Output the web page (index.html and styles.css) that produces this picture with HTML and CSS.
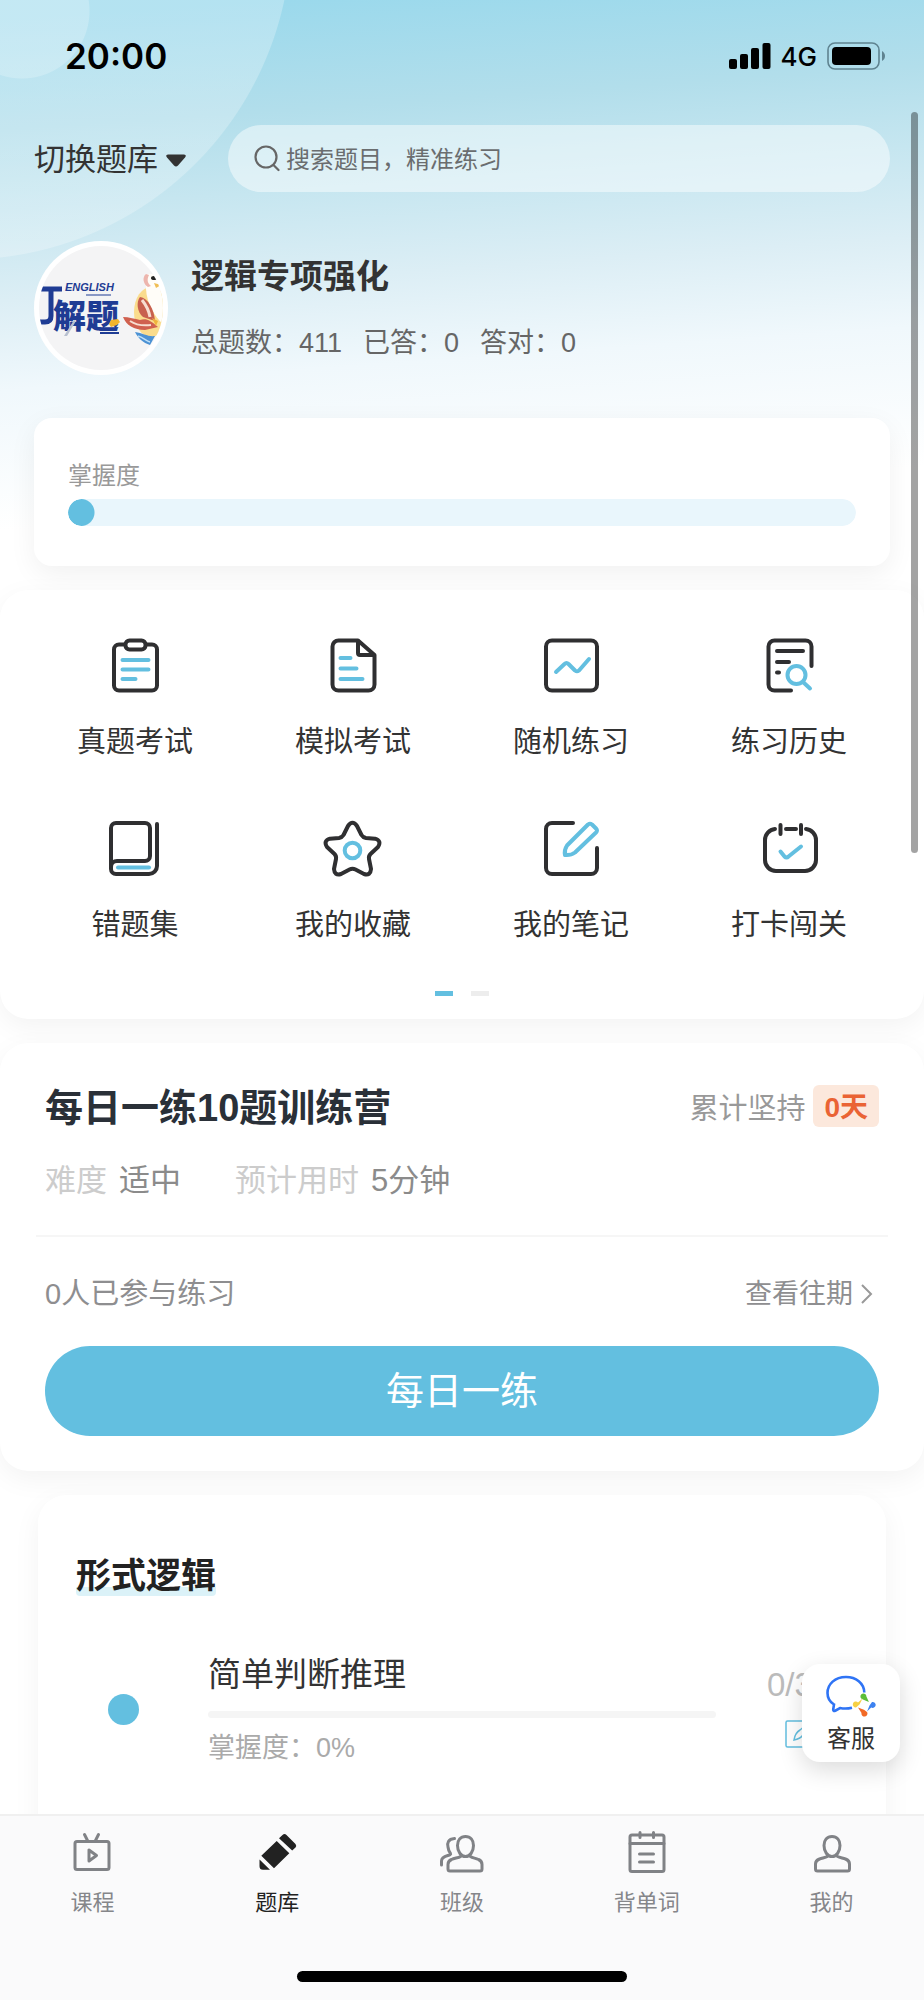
FILE: index.html
```html
<!DOCTYPE html>
<html lang="zh-CN">
<head>
<meta charset="utf-8">
<meta name="viewport" content="width=device-width, initial-scale=1">
<title>题库</title>
<link rel="stylesheet" href="styles.css">
</head>
<body>
<div class="app">
  <main class="content">
    <div class="statusbar">
      <span class="clock">20:00</span>
      <div class="status-icons">
        <svg width="42" height="28" viewBox="0 0 42 28" aria-hidden="true"><rect x="0" y="17" width="8" height="10" rx="2"/><rect x="11" y="12" width="8" height="15" rx="2"/><rect x="22" y="6" width="8" height="21" rx="2"/><rect x="33.500" y="1" width="8" height="26" rx="2"/></svg>
        <span class="network">4G</span>
        <svg width="60" height="28" viewBox="0 0 60 28" aria-hidden="true"><rect x="1" y="1" width="51" height="26" rx="7" fill="none" stroke="#5f8390" stroke-width="1.600"/><rect x="5" y="5" width="39" height="18" rx="4"/><path d="M55 9v10c4-2 4-8 0-10z" fill="#5f8390"/></svg>
      </div>
    </div>

    <div class="toolbar">
      <button class="switch" type="button">切换题库<svg width="20" height="13" viewBox="0 0 20 13" aria-hidden="true"><path d="M2 .5h16q3 .5 1 3l-7 8q-2 2-4 0l-7-8q-2-2.500 1-3z" fill="#333"/></svg></button>
      <label class="search">
        <svg width="26" height="27" viewBox="0 0 26 27" fill="none" stroke="#666" stroke-width="2.200" stroke-linecap="round" aria-hidden="true"><circle cx="12" cy="12" r="10.500"/><path d="M19.500 20l5 5"/></svg>
        <input type="search" placeholder="搜索题目，精准练习" aria-label="搜索题目">
      </label>
    </div>

    <section class="profile">
      <svg class="avatar" viewBox="0 0 134 134" role="img" aria-label="丁解题">
        <defs><clipPath id="face"><circle cx="67" cy="67" r="62"/></clipPath></defs>
        <circle cx="67" cy="67" r="67" fill="#fff"/>
        <circle cx="67" cy="67" r="62" fill="#f4f4f5"/>
        <g clip-path="url(#face)">
          <path d="M6 48h22M17 48v27q0 6-6 6H6" fill="none" stroke="#1f3c94" stroke-width="5"/>
          <text class="logo-en" x="31" y="50">ENGLISH</text>
          <path d="M52 54h25" stroke="#1f3c94" stroke-width="1"/>
          <text class="logo-cn" x="19" y="87">解题</text>
          <path d="M66 92h19" stroke="#1f3c94" stroke-width="2" fill="none"/>
          <path d="M30 95l10-16 2 1-9 15z" fill="#b8c0cf"/>
          <path d="M77 79l7-1 2 3-3 3-6 2-2-3z" fill="#f1b52d"/>
          <ellipse cx="117" cy="71" rx="17" ry="25" fill="#fadc8d"/>
          <path d="M112 34c5-3 10 0 14 4l4 8v38c-9-8-17-20-18-36z" fill="#fffdf8"/>
          <path d="M112 33c-4 3-3 10 2 13l3-1c-4-3-4-7-2-11z" fill="#edb5ad"/>
          <ellipse cx="120" cy="37" rx="3" ry="2" fill="#222"/>
          <path d="M120 42l7 2-5 3z" fill="#f0be54"/>
          <path d="M106 56c8 1 14 12 15 24l-12-4c-6-5-7-15-3-20z" fill="#c8604e"/>
          <path d="M108 59c4 5 7 11 8 17" stroke="#f7ddd0" stroke-width="3" fill="none"/>
          <path d="M89 76c6 0 12 2 17 3 6-2 10 0 18 7l-13 3c-11 0-19-5-22-13z" fill="#d0604f"/>
          <path d="M96 80c6 4 13 5 21 4" stroke="#f7ddd0" stroke-width="2" fill="none"/>
          <path d="M118 77l6 3-2 5z" fill="#efb23c"/>
          <path d="M101 91c8 1 13 5 20 4l-5 9c-7-2-12-7-15-13z" fill="#4c92d4"/>
          <path d="M104 95c5 1 8 5 12 6" stroke="#c2e1f7" stroke-width="1.500" fill="none"/>
        </g>
      </svg>
      <div class="profile-text">
        <h1>逻辑专项强化</h1>
        <p class="stats"><span>总题数：411</span><span>已答：0</span><span>答对：0</span></p>
      </div>
    </section>

    <section class="mastery">
      <label for="mastery">掌握度</label>
      <progress id="mastery" value="0" max="100"></progress>
    </section>

    <section class="panel menu">
      <nav class="grid">
        <a href="#"><svg class="icon" viewBox="0 0 56 56"><rect x="7" y="7.500" width="43" height="46" rx="5"/><rect x="18.500" y="3.500" width="20" height="9" rx="4" fill="#fff"/><path class="hl" d="M15.500 23h26M15.500 32.500h26M15.500 42h13"/></svg>真题考试</a>
        <a href="#"><svg class="icon" viewBox="0 0 56 56"><path d="M33 3.500H13.500a6 6 0 0 0-6 6v38a6 6 0 0 0 6 6h30a6 6 0 0 0 6-6V18L33 3.500V16q0 2 2 2h14.500"/><path class="hl" d="M15.500 21h10M15.500 31.500h16M15.500 42h22"/></svg>模拟考试</a>
        <a href="#"><svg class="icon" viewBox="0 0 56 56"><rect x="3" y="3.500" width="51" height="50" rx="6"/><path class="hl" d="M13 35l8.500-8q2-2 4 0l6.500 6.500q2 1.500 4 0L46 22"/></svg>随机练习</a>
        <a href="#"><svg class="icon" viewBox="0 0 56 56"><path d="M30 53.500H13.500a6 6 0 0 1-6-6v-38a6 6 0 0 1 6-6h31a6 6 0 0 1 6 6V29M16 14h26M16 25h12M16 35.500h2"/><path class="hl" d="M42 45l7 6.500"/><circle class="hl" cx="35.500" cy="38" r="9"/></svg>练习历史</a>
        <a href="#"><svg class="icon" viewBox="0 0 56 56"><path d="M4 48V8a5 5 0 0 1 5-5h29a5 5 0 0 1 5 5v28a5 5 0 0 1-5 5H10a6 6 0 0 0-6 6v2a5 5 0 0 0 5 5h33a8 8 0 0 0 8-8V4"/><path class="hl" d="M11 47.500h31"/></svg>错题集</a>
        <a href="#"><svg class="icon" viewBox="0 0 56 56"><path d="M23 6Q27.500-.5 32 6l4.500 9q1.500 2.500 4.500 3l9 .7q7 2 3 8.300l-7.500 7q-2 2-1.500 5l2 10q-.5 7-7 5l-8.500-4.500q-3-1.500-6 0L16 54q-6.500 2-7-5l2-10q.5-3-1.500-5L2 27q-4-6.300 3-8.300l9-.7q3-.5 4.500-3z"/><circle class="hl" cx="27.500" cy="30.500" r="7.800"/></svg>我的收藏</a>
        <a href="#"><svg class="icon" viewBox="0 0 56 56"><path d="M30 3H9a6 6 0 0 0-6 6v39a6 6 0 0 0 6 6h39a6 6 0 0 0 6-6V28"/><path class="hl" d="M24 25.500L45 4.500q2-1.500 4 0L53 8.500q2 2 0 4L32 32.500q-4 3-10 2.500-1-5 2-9.500z"/></svg>我的笔记</a>
        <a href="#"><svg class="icon" viewBox="0 0 56 56"><path d="M14 9A11 11 0 0 0 4 20v20a11 11 0 0 0 11 11h29a11 11 0 0 0 11-11V20A11 11 0 0 0 45 9M25 9h10M19.500 5v9M40 5v9"/><path class="hl" d="M19.500 31.500l4 5q2 2 4 0L40 26.500"/></svg>打卡闯关</a>
      </nav>
      <div class="dots"><i class="on"></i><i></i></div>
    </section>

    <section class="panel daily">
      <div class="row head">
        <h2>每日一练10题训练营</h2>
        <p class="streak">累计坚持<strong>0天</strong></p>
      </div>
      <dl class="meta">
        <div><dt>难度</dt><dd>适中</dd></div>
        <div><dt>预计用时</dt><dd>5分钟</dd></div>
      </dl>
      <hr>
      <div class="row foot">
        <span>0人已参与练习</span>
        <a class="past" href="#">查看往期<svg width="12" height="20" viewBox="0 0 12 20" fill="none" stroke="#999" stroke-width="2" aria-hidden="true"><path d="M1 1l9 9-9 9"/></svg></a>
      </div>
      <button class="start" type="button">每日一练</button>
    </section>

    <section class="chapter">
      <h3>形式逻辑</h3>
      <article class="lesson">
        <span class="bullet"></span>
        <div class="lesson-main">
          <h4>简单判断推理</h4>
          <div class="track"></div>
          <p>掌握度：0%</p>
        </div>
        <div class="lesson-side">
          <span>0/3</span>
          <svg width="28" height="28" viewBox="0 0 28 28" fill="none" stroke="#63bfe0" stroke-width="1.500" aria-hidden="true"><rect x="1" y="1" width="26" height="26" rx="1.500"/><path d="M9 20q1-7 6-10l5-4 3 3-5 6q-3 4-9 5z"/></svg>
        </div>
      </article>
    </section>

    <span class="scrollbar"></span>
    <button class="service" type="button">
      <svg width="52" height="42" viewBox="0 0 52 42" aria-hidden="true"><path d="M39.300 17.500C39 8 31 2 21 2 10 2 2.500 9 2.500 18c0 5 2.500 9 6.500 11.500l-.8 5q0 2 2 1.200L15 33q6 1.200 12-.3" fill="none" stroke="#2f74f5" stroke-width="2.600"/><path d="M36.200 23.500a3 3 0 1 1 5.200-2l2.500 5.500-6-2.500z" fill="#5bbd38"/><path d="M31 32.500a3 3 0 1 1 2-5l4.500-4-3 6z" fill="#f7d044"/><path d="M47 27a3 3 0 1 1-.8 5.500L42 36.500l2.500-6z" fill="#3d82f0"/><path d="M42 37a3 3 0 1 1-5.500 1L33 32.500l6 2.300z" fill="#f26a26"/></svg>
      客服
    </button>
  </main>

  <footer class="tabbar">
    <nav class="tabs">
      <a href="#"><svg class="tab-icon" viewBox="0 0 44 44"><rect x="5" y="10.500" width="34" height="28" rx="2"/><path d="M14.500 3.500l3 6M28.500 3.500l-3 6M19 19v11l7.500-5.500z"/></svg>课程</a>
      <a href="#" class="current" aria-current="page"><svg class="tab-icon solid" viewBox="0 0 44 44"><path d="M27.500 4q2-2 4 0l9 9q1.500 2 0 3.500L37.200 19.500 24 7.300zM21.700 10l12.600 12.300L19 37.300 6.300 24.700zM4.500 28.500L15 38.800H8q-3.500 0-3.500-3.500z"/></svg>题库</a>
      <a href="#"><svg class="tab-icon" viewBox="0 0 44 44"><path d="M14.500 7.500C8 8 7 12 8 16c.3 3 1 4.500 2.500 6.500C12 25 1.500 24 1.500 30v4M25.500 5.500c5 0 8 3.500 8 9 0 6-3.500 11-8 11s-8-5-8-11c0-5.500 3-9 8-9zM20.500 25.500c-2 1.500-6 1.500-9 3q-3.500 1.500-3.500 5V38q0 2 2 2h30q2 0 2-2v-4.500q0-3.500-3.500-5c-3-1.500-6-1.500-8-3"/></svg>班级</a>
      <a href="#"><svg class="tab-icon" viewBox="0 0 44 44"><rect x="5" y="4" width="34" height="36.500" rx="2"/><path d="M5 12.500h34M15 1.500v5M28.500 1.500v5M14.500 23h14M14.500 31h14"/></svg>背单词</a>
      <a href="#"><svg class="tab-icon" viewBox="0 0 44 44"><path d="M22 5.500c5 0 8 3.500 8 9 0 6-3.500 11-8 11s-8-5-8-11c0-5.500 3-9 8-9zM17.500 25.500c-2 1-5 1.500-8 2.500q-4 1.500-4 5V38q0 2 2 2h30q2 0 2-2v-5q0-3.500-4-5c-3-1-6-1.500-8-2.500"/></svg>我的</a>
    </nav>
    <span class="home"></span>
  </footer>
</div>
</body>
</html>
```
FILE: styles.css
```css
* { box-sizing: border-box; }

body, h1, h2, h3, h4, p, dl, dd { margin: 0; }

body {
  background: #fff;
  color: #333;
  font-family: "Liberation Sans", "Noto Sans CJK SC", sans-serif;
}

a { color: inherit; text-decoration: none; }

button {
  border: 0;
  padding: 0;
  background: none;
  color: inherit;
  font: inherit;
}

.app {
  display: flex;
  flex-direction: column;
  height: 100vh;
}

.content {
  position: relative;
  flex: 1;
  min-height: 0;
  overflow: hidden;
  background:
    radial-gradient(circle at 22px 11px, rgba(255, 255, 255, .22) 67px, transparent 68px),
    radial-gradient(circle at -36px -68px, rgba(255, 255, 255, .25) 327px, transparent 328px),
    linear-gradient(176deg, #9bd9ec 20px, #b2deeb 130px, #c6e6f0 210px, #dceef5 300px, #f0f8fc 390px, #fff 530px);
}

/* Status bar */
.statusbar {
  display: flex;
  align-items: center;
  justify-content: space-between;
  height: 112px;
  padding: 0 37px 0 65px;
  color: #000;
  font-family: Inter, sans-serif;
}

.clock { font-size: 35px; font-weight: 600; }
.status-icons { display: flex; align-items: center; gap: 10px; }
.network { font-size: 26px; font-weight: 500; }

/* Toolbar */
.toolbar {
  display: flex;
  align-items: center;
  gap: 42px;
  padding: 13px 34px 0;
}

.switch {
  display: flex;
  align-items: center;
  gap: 8px;
  padding-top: 3px;
  font-size: 31px;
  line-height: 44px;
}

.search {
  display: flex;
  flex: 1;
  align-items: center;
  gap: 6px;
  height: 67px;
  padding: 0 26px;
  border-radius: 34px;
  background: rgba(255, 255, 255, .47);
}

.search input {
  flex: 1;
  min-width: 0;
  border: 0;
  padding: 2px 0 0;
  outline: 0;
  background: none;
  font: inherit;
  font-size: 24px;
}

.search input::placeholder { color: #6a6d6f; opacity: 1; }

/* Profile */
.profile {
  display: flex;
  align-items: center;
  gap: 23px;
  padding: 49px 34px 0;
}

.avatar { width: 134px; height: 134px; }
.logo-en { fill: #1f3c94; font: italic bold 11px "Liberation Sans", sans-serif; }
.logo-cn { fill: #1f3c94; font: 900 33px "Noto Sans CJK SC", sans-serif; }
.profile h1 { font-size: 33px; line-height: 48px; }

.stats {
  display: flex;
  gap: 21px;
  margin-top: 22px;
  color: #666;
  font-size: 27px;
  line-height: 40px;
}

/* Mastery card */
.mastery {
  margin: 43px 34px 24px;
  padding: 41px 34px 40px;
  border-radius: 18px;
  background: #fff;
  box-shadow: 0 8px 28px rgba(0, 0, 0, .06);
}

.mastery label {
  display: block;
  margin-bottom: 6px;
  color: #999;
  font-size: 24px;
  line-height: 34px;
}

.mastery progress {
  display: block;
  appearance: none;
  width: 100%;
  height: 27px;
  border: 0;
  border-radius: 14px;
  overflow: hidden;
}

.mastery progress::-webkit-progress-bar {
  border-radius: 14px;
  background: radial-gradient(circle at 13px 50%, #63bfe0 13px, #e9f6fc 14px);
}

.mastery progress::-webkit-progress-value { background: #63bfe0; }

/* Panels */
.panel {
  margin-bottom: 24px;
  border-radius: 28px;
  background: #fff;
  box-shadow: 0 8px 28px rgba(0, 0, 0, .05);
}

.menu { padding: 47px 26px 23px; }

.grid {
  display: grid;
  grid-template-columns: repeat(4, 1fr);
  row-gap: 58px;
}

.grid a {
  display: flex;
  flex-direction: column;
  align-items: center;
  gap: 29px;
  font-size: 29px;
  line-height: 40px;
}

.icon {
  width: 56px;
  height: 56px;
  overflow: visible;
  fill: none;
  stroke: #2f2f31;
  stroke-width: 4;
  stroke-linecap: round;
  stroke-linejoin: round;
}

.icon .hl { stroke: #63bfe0; }

.dots {
  display: flex;
  justify-content: center;
  gap: 18px;
  margin-top: 46px;
}

.dots i { width: 18px; height: 5px; background: #ededed; }
.dots .on { background: #63bfe0; }

/* Daily practice */
.daily { padding: 40px 45px 35px; }

.row {
  display: flex;
  align-items: center;
  justify-content: space-between;
}

.daily h2 {
  padding-top: 4px;
  color: #2a3038;
  font-size: 38px;
  line-height: 42px;
}

.streak {
  display: flex;
  align-items: center;
  gap: 8px;
  color: #999;
  font-size: 29px;
}

.streak strong {
  padding: 3px 11px 0;
  border-radius: 6px;
  background: #fce8dc;
  color: #ea6334;
  font-size: 28px;
  line-height: 39px;
}

.meta {
  display: flex;
  gap: 54px;
  margin-top: 32px;
  font-size: 31px;
  line-height: 40px;
}

.meta div { display: flex; gap: 12px; }
.meta dt { color: #ccc; }
.meta dd { color: #8b8b8b; }

.daily hr {
  height: 2px;
  margin: 34px -9px 37px;
  border: 0;
  background: #f6f6f6;
}

.foot { color: #8e8e90; font-size: 29px; line-height: 40px; }

.past {
  display: flex;
  align-items: center;
  gap: 8px;
  padding-right: 6px;
  font-size: 27px;
}

.start {
  display: block;
  width: 100%;
  margin-top: 32px;
  border-radius: 45px;
  background: #63bfe0;
  color: #fff;
  font-size: 38px;
  line-height: 90px;
}

/* Chapter */
.chapter {
  margin: 0 38px;
  padding: 59px 38px 100px;
  border-radius: 28px;
  background: #fff;
  box-shadow: 0 8px 28px rgba(0, 0, 0, .05);
}

.chapter h3 {
  width: fit-content;
  padding-top: 2px;
  border-radius: 4px;
  background: linear-gradient(transparent 33px, #dbf2f8 33px);
  color: #222;
  font-size: 35px;
  line-height: 40px;
}

.lesson {
  display: flex;
  gap: 51px;
  margin-top: 57px;
}

.bullet {
  width: 31px;
  height: 31px;
  margin: 41px 0 0 32px;
  border-radius: 50%;
  background: #63bfe0;
}

.lesson-main { flex: 1; margin-left: 18px; }
.lesson h4 { font-size: 33px; font-weight: 400; line-height: 44px; }

.track {
  height: 7px;
  margin: 14px 0 12px;
  border-radius: 4px;
  background: #f5f5f5;
}

.lesson p { color: #aaa; font-size: 27px; line-height: 36px; }

.lesson-side {
  width: 64px;
  margin: 10px 17px 0 0;
  color: #bbb;
  font-size: 33px;
  line-height: 44px;
}

.lesson-side svg { display: block; margin: 13px auto 0; }

/* Overlays */
.scrollbar {
  position: absolute;
  top: 112px;
  right: 6px;
  width: 7px;
  height: 741px;
  border-radius: 4px;
  background: rgba(0, 0, 0, .36);
}

.service {
  position: absolute;
  right: 24px;
  bottom: 52px;
  display: flex;
  flex-direction: column;
  align-items: center;
  gap: 5px;
  width: 98px;
  padding: 11px 0 6px;
  border-radius: 18px;
  background: #fff;
  box-shadow: 0 8px 24px rgba(0, 0, 0, .14);
  font-size: 24px;
  line-height: 34px;
}

/* Tab bar */
.tabbar {
  display: flex;
  flex-direction: column;
  align-items: center;
  border-top: 2px solid #f0f0f0;
  background: #fafafb;
}

.tabs {
  display: grid;
  grid-template-columns: repeat(5, 1fr);
  width: 100%;
  padding-top: 15px;
}

.tabs a {
  display: flex;
  flex-direction: column;
  align-items: center;
  gap: 12px;
  color: #85868a;
  font-size: 22px;
  line-height: 32px;
}

.tabs .current { color: #222; }

.tab-icon {
  width: 44px;
  height: 44px;
  fill: none;
  stroke: #808286;
  stroke-width: 3;
  stroke-linecap: round;
  stroke-linejoin: round;
}

.tab-icon.solid { fill: #222; stroke: none; }

.home {
  width: 330px;
  height: 11px;
  margin: 52px 0 18px;
  border-radius: 6px;
  background: #000;
}
```
